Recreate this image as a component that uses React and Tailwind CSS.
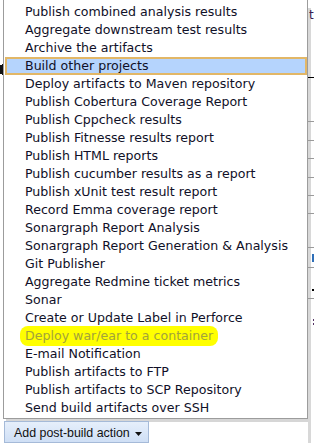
import React from 'react'

const items = [
  'Publish combined analysis results',
  'Aggregate downstream test results',
  'Archive the artifacts',
  'Build other projects',
  'Deploy artifacts to Maven repository',
  'Publish Cobertura Coverage Report',
  'Publish Cppcheck results',
  'Publish Fitnesse results report',
  'Publish HTML reports',
  'Publish cucumber results as a report',
  'Publish xUnit test result report',
  'Record Emma coverage report',
  'Sonargraph Report Analysis',
  'Sonargraph Report Generation & Analysis',
  'Git Publisher',
  'Aggregate Redmine ticket metrics',
  'Sonar',
  'Create or Update Label in Perforce',
  'Deploy war/ear to a container',
  'E-mail Notification',
  'Publish artifacts to FTP',
  'Publish artifacts to SCP Repository',
  'Send build artifacts over SSH',
]

function MenuRow({ label }) {
  if (label === 'Build other projects') {
    return (
      <div className="h-[18px] flex items-center pl-[18px] border-2 border-[#e2b767] bg-[#b5d4fd] box-border">
        {label}
      </div>
    )
  }
  if (label === 'Deploy war/ear to a container') {
    return (
      <div className="h-[18px] flex items-center pl-[15px]">
        <span className="h-[20px] flex items-center pl-[5px] pr-[5px] bg-[#ffff00] rounded-[8px] text-[#a3a33a]">
          {label}
        </span>
      </div>
    )
  }
  return <div className="h-[18px] flex items-center pl-[20px]">{label}</div>
}

// sliver of the page underneath, to the right of the menu
function PageStrip() {
  return (
    <div className="w-[6px] h-full flex flex-col bg-[linear-gradient(to_right,#d8d8d8_3px,#ffffff_3px)]">
      <div className="h-[8px] bg-white" />
      <div className="h-[14px] overflow-visible pl-[1px] text-[12px] leading-[14px] text-[#3a1f55]" style={{ fontFamily: 'Tahoma, "DejaVu Sans", sans-serif' }}>t</div>
      <div className="h-[55px]" />
      <div className="h-[1px] bg-black" />
      <div className="h-[43px]" />
      <div className="h-[1px] bg-[#9a9a9a]" />
      <div className="h-[18px]" />
      <div className="h-[1px] bg-[#9a9a9a]" />
      <div className="h-[17px]" />
      <div className="h-[1px] bg-[#9a9a9a]" />
      <div className="h-[18px]" />
      <div className="h-[1px] bg-[#9a9a9a]" />
      <div className="h-[17px]" />
      <div className="h-[1px] bg-[#9a9a9a]" />
      <div className="h-[17px]" />
      <div className="h-[1px] bg-[#9a9a9a]" />
      <div className="h-[33px]" />
      <div className="h-[1px] bg-[#9a9a9a]" />
      <div className="h-[6px]" />
      <div className="h-[8px] w-[2px] ml-[4px] bg-[#2f6fb8]" />
      <div className="h-[5px]" />
      <div className="h-[1px] bg-[#9a9a9a]" />
      <div className="h-[21px]" />
      <div className="h-[2px] w-[2px] ml-[4px] bg-black" />
      <div className="h-[7px]" />
      <div className="h-[1px] bg-[#9a9a9a]" />
      <div className="h-[20px]" />
      <div className="h-[2px] w-[1px] ml-[5px] bg-[#553366]" />
      <div className="h-[2px]" />
      <div className="h-[2px] w-[1px] ml-[5px] bg-[#553366]" />
    </div>
  )
}

export default function App() {
  return (
    <div
      className="w-[314px] h-[443px] bg-white overflow-hidden flex"
      style={{ fontFamily: '"DejaVu Sans", Verdana, sans-serif' }}
    >
      {/* left gutter with a clipped glyph of the page */}
      <div className="w-[3px] shrink-0 flex flex-col">
        <div className="h-[64px]" />
        <svg width="3" height="11" viewBox="0 0 3 11">
          <path d="M0 1h2v9H0M2 0h1v11H2" fill="#111" />
        </svg>
      </div>

      <div className="w-[305px] shrink-0 flex flex-col">
        <div className="pt-[3px] pb-[1px] pl-[1px] border-l border-r border-b border-[#9c9c9c] bg-white text-[12.6px] text-[#101028] shadow-[3px_3px_0_#d6d6d6]">
          {items.map(label => (
            <MenuRow key={label} label={label} />
          ))}
        </div>

        <button
          className="mt-[2px] ml-[1px] w-[145px] h-[24px] flex items-start pt-[3px] pl-[9px] gap-[5px] border border-[#a5bad8] bg-gradient-to-b from-[#e6effb] to-[#cfdff5] text-[12.4px] text-[#111] leading-[16px]"
          style={{ fontFamily: '"Liberation Sans", Arial, sans-serif' }}
        >
          <span>Add post-build action</span>
          <svg width="7" height="4" viewBox="0 0 7 4" className="mt-[7px]">
            <path d="M0 0h7L3.5 4z" fill="#111" />
          </svg>
        </button>
      </div>

      <PageStrip />
    </div>
  )
}
